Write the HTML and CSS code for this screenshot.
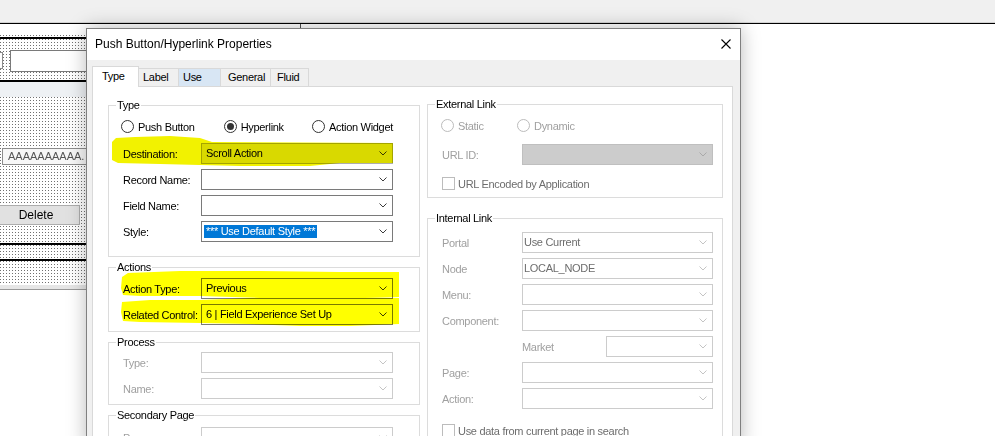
FILE: index.html
```html
<!DOCTYPE html>
<html lang="en">
<head>
<meta charset="utf-8">
<title>Push Button/Hyperlink Properties</title>
<link rel="stylesheet" href="styles.css">
</head>
<body>
<div class="topbar"></div>
<div class="workspace">
  <div class="designer">
    <div class="d-blank"></div>
    <div class="dots d-thin"></div>
    <div class="d-rule"></div>
    <div class="dots d-sec1">
      <div class="d-stub"></div>
      <div class="d-edit"></div>
    </div>
    <div class="d-rule"></div>
    <div class="d-band"></div>
    <div class="dots d-sec2">
      <div class="d-field">AAAAAAAAAA.</div>
      <div class="d-button">Delete</div>
    </div>
    <div class="d-rule"></div>
    <div class="dots d-sec3"></div>
    <div class="d-rule"></div>
    <div class="dots d-sec4"></div>
    <div class="d-foot"></div>
  </div>
</div>

<div class="dialog">
  <div class="titlebar">
    <span class="title">Push Button/Hyperlink Properties</span>
    <svg class="close" width="10" height="10" viewBox="0 0 10 10"><path d="M0.5 0.5 L9.5 9.5 M9.5 0.5 L0.5 9.5" stroke="#000" stroke-width="1.1" fill="none"/></svg>
  </div>
  <div class="dlg-body">
    <div class="tabs">
      <div class="tab active t-type">Type</div>
      <div class="tab t-label">Label</div>
      <div class="tab hover t-use">Use</div>
      <div class="tab t-general">General</div>
      <div class="tab t-fluid">Fluid</div>
    </div>
    <div class="panel">
      <div class="col col-left">
        <fieldset class="group g-type">
          <legend>Type</legend>
          <div class="radios r-left">
            <div class="opt o-push"><span class="radio"></span>Push Button</div>
            <div class="opt o-hyper"><span class="radio on"></span>Hyperlink</div>
            <div class="opt"><span class="radio"></span>Action Widget</div>
          </div>
          <div class="row">
            <span class="lbl">Destination:</span>
            <div class="combo dest"><span class="val">Scroll Action</span><svg class="chev" width="8" height="5" viewBox="0 0 8 5"><polyline points="0.5,0.5 4,4 7.5,0.5"/></svg></div>
          </div>
          <div class="row">
            <span class="lbl">Record Name:</span>
            <div class="combo"><span class="val"></span><svg class="chev" width="8" height="5" viewBox="0 0 8 5"><polyline points="0.5,0.5 4,4 7.5,0.5"/></svg></div>
          </div>
          <div class="row">
            <span class="lbl">Field Name:</span>
            <div class="combo"><span class="val"></span><svg class="chev" width="8" height="5" viewBox="0 0 8 5"><polyline points="0.5,0.5 4,4 7.5,0.5"/></svg></div>
          </div>
          <div class="row">
            <span class="lbl">Style:</span>
            <div class="combo"><span class="val sel">*** Use Default Style ***</span><svg class="chev" width="8" height="5" viewBox="0 0 8 5"><polyline points="0.5,0.5 4,4 7.5,0.5"/></svg></div>
          </div>
        </fieldset>

        <fieldset class="group g-actions">
          <legend>Actions</legend>
          <div class="row">
            <span class="lbl">Action Type:</span>
            <div class="combo"><span class="val">Previous</span><svg class="chev" width="8" height="5" viewBox="0 0 8 5"><polyline points="0.5,0.5 4,4 7.5,0.5"/></svg></div>
          </div>
          <div class="row">
            <span class="lbl">Related Control:</span>
            <div class="combo"><span class="val">6 | Field Experience Set Up</span><svg class="chev" width="8" height="5" viewBox="0 0 8 5"><polyline points="0.5,0.5 4,4 7.5,0.5"/></svg></div>
          </div>
        </fieldset>

        <fieldset class="group g-process">
          <legend>Process</legend>
          <div class="row">
            <span class="lbl dim">Type:</span>
            <div class="combo off"><span class="val"></span><svg class="chev" width="8" height="5" viewBox="0 0 8 5"><polyline points="0.5,0.5 4,4 7.5,0.5"/></svg></div>
          </div>
          <div class="row">
            <span class="lbl dim">Name:</span>
            <div class="combo off"><span class="val"></span><svg class="chev" width="8" height="5" viewBox="0 0 8 5"><polyline points="0.5,0.5 4,4 7.5,0.5"/></svg></div>
          </div>
        </fieldset>

        <fieldset class="group g-secondary">
          <legend>Secondary Page</legend>
          <div class="row">
            <span class="lbl dim">Page:</span>
            <div class="combo off"><span class="val"></span><svg class="chev" width="8" height="5" viewBox="0 0 8 5"><polyline points="0.5,0.5 4,4 7.5,0.5"/></svg></div>
          </div>
        </fieldset>
      </div>

      <div class="col col-right">
        <fieldset class="group g-external">
          <legend>External Link</legend>
          <div class="radios r-right">
            <div class="opt o-static dim"><span class="radio off"></span>Static</div>
            <div class="opt dim"><span class="radio off"></span>Dynamic</div>
          </div>
          <div class="row r-url">
            <span class="lbl dim">URL ID:</span>
            <div class="combo grey"><span class="val"></span><svg class="chev" width="8" height="5" viewBox="0 0 8 5"><polyline points="0.5,0.5 4,4 7.5,0.5"/></svg></div>
          </div>
          <div class="check c-url"><span class="box"></span>URL Encoded by Application</div>
        </fieldset>

        <fieldset class="group g-internal">
          <legend>Internal Link</legend>
          <div class="row">
            <span class="lbl dim">Portal</span>
            <div class="combo off"><span class="val">Use Current</span><svg class="chev" width="8" height="5" viewBox="0 0 8 5"><polyline points="0.5,0.5 4,4 7.5,0.5"/></svg></div>
          </div>
          <div class="row">
            <span class="lbl dim">Node</span>
            <div class="combo off"><span class="val">LOCAL_NODE</span><svg class="chev" width="8" height="5" viewBox="0 0 8 5"><polyline points="0.5,0.5 4,4 7.5,0.5"/></svg></div>
          </div>
          <div class="row">
            <span class="lbl dim">Menu:</span>
            <div class="combo off"><span class="val"></span><svg class="chev" width="8" height="5" viewBox="0 0 8 5"><polyline points="0.5,0.5 4,4 7.5,0.5"/></svg></div>
          </div>
          <div class="row">
            <span class="lbl dim">Component:</span>
            <div class="combo off"><span class="val"></span><svg class="chev" width="8" height="5" viewBox="0 0 8 5"><polyline points="0.5,0.5 4,4 7.5,0.5"/></svg></div>
          </div>
          <div class="row">
            <span class="lbl"></span>
            <span class="lbl-market dim">Market</span>
            <div class="combo off small"><span class="val"></span><svg class="chev" width="8" height="5" viewBox="0 0 8 5"><polyline points="0.5,0.5 4,4 7.5,0.5"/></svg></div>
          </div>
          <div class="row">
            <span class="lbl dim">Page:</span>
            <div class="combo off"><span class="val"></span><svg class="chev" width="8" height="5" viewBox="0 0 8 5"><polyline points="0.5,0.5 4,4 7.5,0.5"/></svg></div>
          </div>
          <div class="row">
            <span class="lbl dim">Action:</span>
            <div class="combo off"><span class="val"></span><svg class="chev" width="8" height="5" viewBox="0 0 8 5"><polyline points="0.5,0.5 4,4 7.5,0.5"/></svg></div>
          </div>
          <div class="check c-search"><span class="box"></span>Use data from current page in search</div>
        </fieldset>
      </div>
    </div>
  </div>
</div>

<svg class="marker" width="995" height="436" viewBox="0 0 995 436">
  <path class="m-dest" d="M112,142 L116,138 L135,137 L170,136 L200,138 L212,142 L393,143 L393,163 L340,163 L310,166 L240,166 L200,165 L160,164 L118,163 L112,160 Z"/>
  <path class="m-act" d="M122,277 L128,273 L180,271 L260,271 L340,272 L399,272 L399,297 L330,299 L260,298 L200,296 L140,296 L123,295 L121,288 Z"/>
  <path class="m-act" d="M122,302 L150,300 L200,300 L250,298 L300,297 L399,298 L399,324 L350,326 L300,326 L250,324 L200,323 L140,322 L123,321 L121,312 Z"/>
</svg>
</body>
</html>
```

FILE: styles.css
```css
* { box-sizing: border-box; }

html, body { margin: 0; padding: 0; }

body {
  width: 995px;
  height: 436px;
  overflow: hidden;
  position: relative;
  background: #fff;
  font-family: "Liberation Sans", Arial, sans-serif;
  font-size: 11px;
  letter-spacing: -0.3px;
  color: #000;
}

/* ---------- background application ---------- */
.topbar {
  height: 24px;
  background: #f0f0f0;
  border-bottom: 1px solid #000;
  box-shadow: inset 0 -1px 0 #d2d2d2;
}

.workspace { display: flex; }

.designer {
  width: 301px;
  border-right: 1px solid #505050;
  display: flex;
  flex-direction: column;
}

.dots {
  background-color: #fff;
  background-image: url("data:image/svg+xml,%3Csvg xmlns='http://www.w3.org/2000/svg' width='3' height='3' shape-rendering='crispEdges'%3E%3Crect width='1' height='1' fill='%23707070'/%3E%3C/svg%3E");
  background-size: 3px 3px;
}

.d-blank { height: 11px; }
.d-thin { height: 2px; }
.d-rule { height: 2px; background: #000; }
.d-sec1 { height: 41px; display: flex; align-items: flex-start; }
.d-stub {
  width: 3px; height: 17px; margin-top: 13px;
  border: 1px solid #8c8c8c; border-left: none; background: #fff;
}
.d-edit {
  flex: 1; height: 22px; margin: 11px 0 0 7px;
  border: 1px solid #7a7a7a; background: #fff;
}
.d-band { height: 15px; background: #eef1f4; }
.d-sec2 { height: 146px; display: flex; flex-direction: column; align-items: flex-start; }
.d-field {
  margin: 51px 0 0 2px; width: 298px; height: 17px;
  border: 1px solid #8c8c8c; background: #f7f7f7;
  color: #555; letter-spacing: 0; line-height: 15px; padding-left: 5px;
}
.d-button {
  margin: 40px 0 0 -8px; width: 88px; height: 20px;
  border: 1px solid #adadad; background: #e1e1e1;
  font-size: 12px; letter-spacing: 0;
  display: flex; align-items: center; justify-content: center;
}
.d-sec3 { height: 14px; }
.d-sec4 { height: 24px; }
.d-foot { height: 5px; background: #e6e6e6; border-bottom: 1px solid #9a9a9a; }

/* ---------- dialog window ---------- */
.dialog {
  position: absolute;
  left: 86px;
  top: 28px;
  width: 655px;
  height: 420px;
  border: 1px solid #7f7f7f;
  background: #f0f0f0;
  box-shadow: 0 0 18px rgba(0, 0, 0, 0.28);
  display: flex;
  flex-direction: column;
}

.titlebar {
  height: 31px;
  flex: none;
  background: #fff;
  display: flex;
  align-items: center;
  justify-content: space-between;
  padding: 0 9px 2px 8px;
  font-size: 12px;
  letter-spacing: 0;
}
.close { display: block; }

.dlg-body {
  flex: 1;
  display: flex;
  flex-direction: column;
  padding: 6px 7px 0 5px;
  min-height: 0;
}

.tabs {
  display: flex;
  align-items: flex-end;
  height: 21px;
  margin-bottom: -1px;
  position: relative;
  z-index: 1;
}
.tab {
  height: 19px;
  border: 1px solid #d9d9d9;
  border-left: none;
  background: #f0f0f0;
  display: flex;
  align-items: center;
  padding-bottom: 1px;
}
.tab.active {
  height: 21px;
  border-left: 1px solid #d9d9d9;
  border-bottom: none;
  background: #fff;
  padding-bottom: 2px;
}
.tab.hover { background: #d8e6f4; }
.t-type { width: 47px; padding-left: 9px; }
.t-label { width: 40px; padding-left: 4px; }
.t-use { width: 42px; padding-left: 4px; }
.t-general { width: 50px; padding-left: 7px; }
.t-fluid { width: 38px; padding-left: 6px; }

.panel {
  flex: 1;
  background: #fff;
  border: 1px solid #d9d9d9;
  padding: 12px 9px 0 15px;
  display: flex;
  align-items: flex-start;
  gap: 7px;
}

.col { display: flex; flex-direction: column; }
.col-left { width: 312px; }
.col-right { width: 296px; margin-top: -1px; }

/* ---------- group boxes ---------- */
.group {
  margin: 0;
  min-width: 0;
  border: 1px solid #dcdcdc;
  padding: 8px 26px 14px 14px;
}
.group legend {
  padding: 0 1px;
  margin-left: -7px;
  line-height: 13px;
  height: 13px;
}
.g-actions { margin-top: 4px; padding-top: 4px; padding-bottom: 6px; }
.g-process { margin-top: 4px; padding-top: 3px; padding-bottom: 5px; }
.g-secondary { margin-top: 4px; padding-top: 5px; padding-bottom: 20px; }
.g-external { padding: 8px 9px 7px 14px; }
.g-internal { margin-top: 14px; padding: 7px 9px 20px 14px; }

/* ---------- rows & controls ---------- */
.row { display: flex; align-items: center; height: 21px; }
.row + .row { margin-top: 5px; }
.lbl { width: 78px; flex: none; white-space: nowrap; }
.col-right .lbl { width: 80px; }
.lbl-market { width: 84px; flex: none; }
.dim { color: #a0a0a0; }

.combo {
  width: 192px;
  height: 21px;
  flex: none;
  border: 1px solid #7a7a7a;
  background: #fff;
  display: flex;
  align-items: center;
  padding-left: 4px;
  white-space: nowrap;
}
.col-right .combo { width: 191px; padding-left: 1px; }
.combo.small { width: 107px; }
.combo .val { line-height: 13px; }
.combo .val.sel {
  background: #0078d7;
  color: #fff;
  margin-left: -2px;
  padding: 0 2px;
}
.chev {
  margin-left: auto;
  margin-right: 5px;
  flex: none;
  fill: none;
  stroke: #3c3c3c;
  stroke-width: 1;
}
.combo.dest { background: #e5e5e5; border-color: #adadad; }
.combo.off { border-color: #cccccc; color: #6d6d6d; }
.combo.off .chev { stroke: #c4c4c4; }
.combo.grey { background: #cccccc; border-color: #bfbfbf; }
.combo.grey .chev { stroke: #a9a9a9; }

.radios { display: flex; align-items: center; height: 13px; }
.r-left { margin: 0 0 10px -2px; }
.r-right { margin: 0 0 12px -1px; }
.opt { display: flex; align-items: center; white-space: nowrap; }
.o-push { width: 108px; }
.o-hyper { width: 93px; }
.o-static { width: 76px; }

.radio {
  width: 13px;
  height: 13px;
  flex: none;
  border-radius: 50%;
  border: 1px solid #333;
  background: #fff;
  margin-right: 4px;
  display: flex;
  align-items: center;
  justify-content: center;
}
.radio.on::after {
  content: "";
  width: 7px;
  height: 7px;
  border-radius: 50%;
  background: #333;
}
.radio.off { border-color: #bcbcbc; }

.check { display: flex; align-items: center; height: 13px; color: #6d6d6d; white-space: nowrap; }
.check .box {
  width: 13px;
  height: 13px;
  flex: none;
  border: 1px solid #bcbcbc;
  background: #fff;
  margin-right: 3px;
}
.c-url { margin-top: 12px; }
.c-search { margin-top: 15px; }

/* ---------- yellow marker annotation ---------- */
.marker {
  position: absolute;
  left: 0;
  top: 0;
  pointer-events: none;
  mix-blend-mode: multiply;
}
.m-dest { fill: #f2f200; }
.m-act { fill: #ffff00; }
```
